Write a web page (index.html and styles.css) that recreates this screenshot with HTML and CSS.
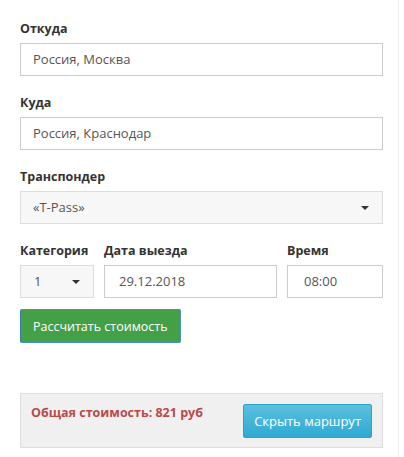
FILE: index.html
```
<!DOCTYPE html>
<html lang="ru">
<head>
    <meta charset="UTF-8">
    <meta name="viewport" content="width=device-width, initial-scale=1.0">
    <title>Расчёт стоимости проезда</title>
    <link rel="stylesheet" href="styles.css">
</head>
<body>
    <div class="panel">
        <form class="route-form">
            <div class="field">
                <label>Откуда</label>
                <div class="control">Россия, Москва</div>
            </div>
            <div class="field">
                <label>Куда</label>
                <div class="control">Россия, Краснодар</div>
            </div>
            <div class="field">
                <label>Транспондер</label>
                <div class="control select">«T-Pass»<span class="caret"></span></div>
            </div>
            <div class="row">
                <div class="field cat">
                    <label>Категория</label>
                    <div class="control select">1<span class="caret"></span></div>
                </div>
                <div class="field date">
                    <label>Дата выезда</label>
                    <div class="control">29.12.2018</div>
                </div>
                <div class="field time">
                    <label>Время</label>
                    <div class="control">08:00</div>
                </div>
            </div>
            <button type="button" class="btn btn-calc">Рассчитать стоимость</button>
        </form>

        <div class="total">
            <span class="total-price">Общая стоимость: 821 руб</span>
            <button type="button" class="btn btn-route">Скрыть маршрут</button>
        </div>
    </div>
</body>
</html>
```
FILE: styles.css
```
body {
    margin: 0;
    font-family: "Open Sans", Arial, sans-serif;
    font-size: 13px;
    color: #333;
    background-color: white;
}
.panel {
    width: 363px;
    padding: 20px 15px 8px 20px;
    border-right: 1px solid #eee;
    min-height: 429px;
}
.field {
    margin-bottom: 18px;
}
label {
    display: block;
    font-weight: bold;
    font-size: 12.5px;
    line-height: 18px;
    margin-bottom: 5px;
    color: #333;
}
.control {
    box-sizing: border-box;
    height: 33px;
    line-height: 31px;
    padding: 0 12px;
    border: 1px solid #ccc;
    color: #555;
    background-color: white;
    position: relative;
}
.select {
    background-color: #f7f7f7;
    border-color: #ddd;
}
.caret {
    position: absolute;
    right: 13px;
    top: 14px;
    border-left: 4px solid transparent;
    border-right: 4px solid transparent;
    border-top: 4px solid #333;
}
.row {
    display: flex;
    gap: 10px;
}
.cat {
    width: 74px;
    flex: none;
}
.cat .control {
    padding-left: 13px;
}
.date {
    flex: 1;
}
.date .control {
    padding-left: 14px;
}
.time {
    width: 96px;
    flex: none;
}
.time .control {
    padding-left: 16px;
}
.row .field {
    margin-bottom: 11px;
}
.btn {
    font-family: "Open Sans", Arial, sans-serif;
    font-size: 12.5px;
    color: white;
    border-radius: 2px;
    cursor: pointer;
}
.btn-calc {
    display: block;
    height: 34px;
    padding: 0 12px;
    background-color: #43a047;
    border: 1px solid #4a90c2;
    border-left-color: #3d7fa8;
}
.total {
    margin-top: 50px;
    height: 53px;
    border: 1px solid #ddd;
    background-color: #f0f0f0;
    display: flex;
    justify-content: space-between;
    align-items: flex-start;
    padding: 0 10px;
}
.total-price {
    margin-top: 10px;
    font-weight: bold;
    color: #b94a48;
    font-size: 12.5px;
}
.btn-route {
    margin-top: 10px;
    height: 34px;
    padding: 0 10px;
    border: 1px solid #2aa3cc;
    background: linear-gradient(#5bc0de, #2fa9d3);
    font-size: 13px;
}
```
